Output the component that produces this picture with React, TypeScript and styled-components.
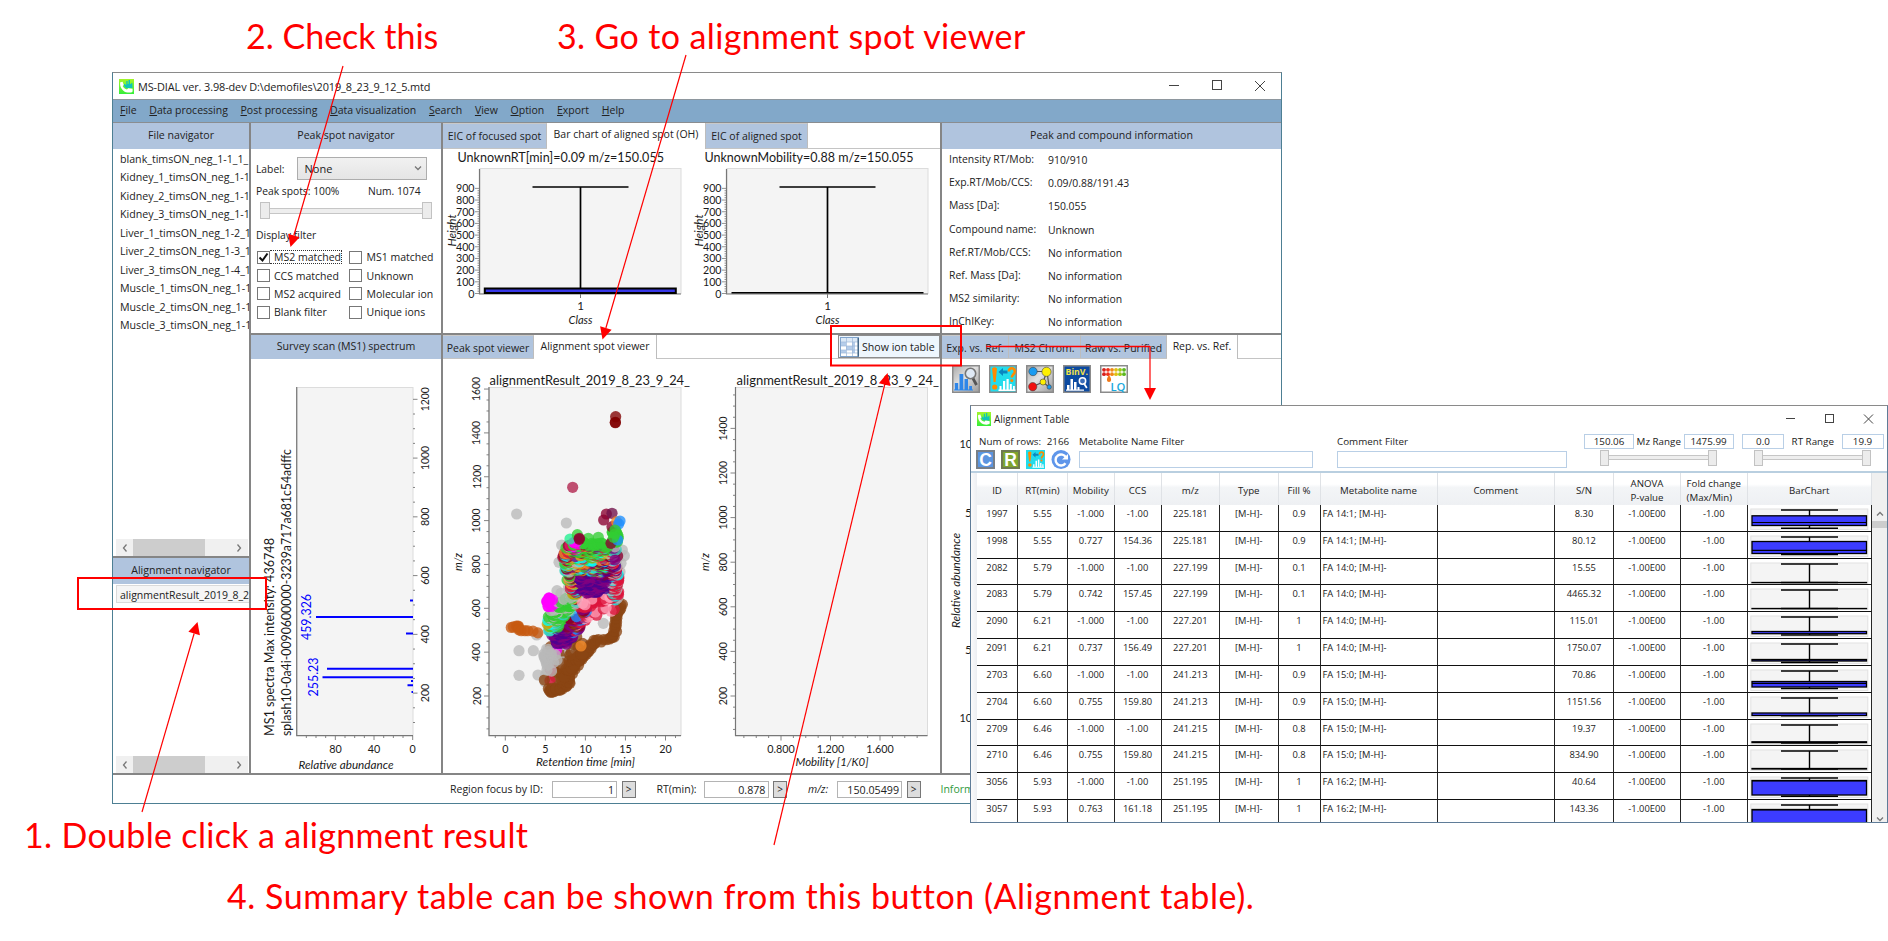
import React from "react";
import styled, { createGlobalStyle, css } from "styled-components";

const ui = `"Open Sans", "Noto Sans", sans-serif`;
const calib = `Lato, "Open Sans", sans-serif`;

const Global = createGlobalStyle`
  body { margin: 0; background: #fff; }
  * { box-sizing: border-box; }
`;

const Page = styled.div`
  position: relative;
  width: 1888px;
  height: 941px;
  overflow: hidden;
  background: #fff;
  font-family: ${ui};
  font-size: 10.6px;
  color: #222;
  white-space: nowrap;
`;

/* ---------- windows ---------- */
const MainWindow = styled.section`
  position: absolute;
  left: 112px;
  top: 72px;
  width: 1170px;
  height: 732px;
  display: flex;
  flex-direction: column;
  background: #fff;
  border: 1px solid #4d7f93;
  border-top-color: #8a8a8a;
`;

const TableWindow = styled.section`
  position: absolute;
  left: 970px;
  top: 405px;
  width: 918px;
  height: 418px;
  display: flex;
  flex-direction: column;
  overflow: hidden;
  background: #fff;
  border: 1px solid #5f7c98;
  border-top-color: #8a8a8a;
  font-size: 9.8px;
`;

const TitleBar = styled.header<{ $small?: boolean }>`
  height: 26px;
  flex: none;
  display: flex;
  align-items: center;
  padding-left: 6px;
  gap: 4px;
  font-size: 10.9px;
  letter-spacing: -0.1px;
  svg { flex: none; }
  ${(p) => p.$small && css`
    gap: 3px;
    font-size: 10px;
    letter-spacing: 0;
  `}
`;
const Spacer = styled.div<{ $w?: number }>`
  flex: ${(p) => (p.$w ? "none" : 1)};
  width: ${(p) => p.$w ?? 0}px;
`;

const MenuBar = styled.nav`
  height: 24px;
  flex: none;
  display: flex;
  align-items: center;
  gap: 12.7px;
  padding: 0 0 3px 7px;
  background: #82a8c9;
  border-top: 1px solid #8e979e;
  border-bottom: 1px solid #8a8d90;
  font-size: 10.5px;
  u { text-underline-offset: 1px; }
`;

const Body = styled.div`
  height: 652px;
  flex: none;
  display: grid;
  grid-template-columns: 136px 190px 497px 339px;
  gap: 2px;
  background: #858585;
  border-bottom: 2px solid #858585;
`;
const Column = styled.div<{ $top: number }>`
  display: grid;
  grid-template-rows: ${(p) => p.$top}px 1fr;
  gap: 2px;
  min-width: 0;
  min-height: 0;
`;
const Panel = styled.div`
  display: flex;
  flex-direction: column;
  background: #fff;
  overflow: hidden;
  min-height: 0;
`;
const PanelHeader = styled.div<{ $h?: number }>`
  height: ${(p) => p.$h ?? 26}px;
  flex: none;
  background: #b0c4de;
  text-align: center;
  line-height: ${(p) => (p.$h ?? 26) - 1}px;
  font-size: 10.6px;
`;

const FileList = styled.div`
  flex: 1;
  padding: 1px 0 0 7px;
  overflow: hidden;
  line-height: 18.45px;
  font-size: 10.65px;
`;
const SelectedItem = styled.div`
  margin: 1px 0 0 3px;
  height: 18px;
  padding-left: 3px;
  line-height: 18px;
  background: #f5f5f5;
  border: 1px solid #dadada;
  border-right: 0;
  overflow: hidden;
  font-size: 10.5px;
`;
const ScrollTrack = styled.div`
  margin: auto 1px 0 3px;
  height: 17px;
  flex: none;
  display: flex;
  align-items: center;
  justify-content: space-between;
  padding: 0 5px;
  background: #f0f0f0;
`;
const ScrollThumb = styled.div`
  width: 72px;
  height: 17px;
  margin-right: 26px;
  background: #cdcdcd;
`;

/* ---------- peak spot navigator ---------- */
const NavBody = styled.div`
  flex: 1;
  padding: 8px 0 0 5px;
`;
const NavLine = styled.div`
  display: flex;
  align-items: center;
  font-size: 10.3px;
`;
const NavText = styled.span<{ $w: number }>`
  width: ${(p) => p.$w}px;
  line-height: 22px;
`;
const SliderPad = styled.div`
  padding: 0 0 0 4px;
`;
const DisplayFilter = styled.div`
  margin-top: 9px;
  line-height: 15px;
  font-size: 10.4px;
`;
const Select = styled.div`
  width: 130px;
  height: 23px;
  margin-left: 13px;
  padding: 0 4px 1px 6px;
  display: flex;
  align-items: center;
  justify-content: space-between;
  background: linear-gradient(#f1f1f1, #e5e5e5);
  border: 1px solid #adadad;
  font-size: 11px;
`;
const Slider = styled.div<{ $w: number; $h: number }>`
  width: ${(p) => p.$w}px;
  height: ${(p) => p.$h}px;
  display: flex;
  align-items: center;
`;
const Thumb = styled.i<{ $w?: number }>`
  width: ${(p) => p.$w ?? 9}px;
  height: 100%;
  background: #ececec;
  border: 1px solid #c2c2c2;
`;
const Track = styled.i<{ $h: number }>`
  flex: 1;
  height: ${(p) => p.$h}px;
  border: solid #c6c6c6;
  border-width: 1px 0;
  background: #eee;
`;
const Checks = styled.div`
  display: grid;
  grid-template-columns: 92.5px 1fr;
  grid-auto-rows: 18.4px;
  margin-top: 5px;
  padding-left: 0.5px;
`;
const Check = styled.div`
  display: flex;
  align-items: center;
  font-size: 10.5px;
`;
const Box = styled.span`
  width: 13px;
  height: 13px;
  flex: none;
  display: grid;
  place-items: center;
  border: 1px solid #777;
  background: #fff;
`;
const CheckLabel = styled.span<{ $focus?: boolean }>`
  height: 14px;
  line-height: 12px;
  padding: 0 0 0 4.5px;
  border: 1px ${(p) => (p.$focus ? "dotted #333" : "solid transparent")};
  border-left-width: 0;
`;

/* ---------- tabs ---------- */
const Tabs = styled.div<{ $h: number }>`
  height: ${(p) => p.$h}px;
  flex: none;
  display: flex;
  align-items: stretch;
  border-bottom: 1px solid #c4c4c4;
`;
const Tab = styled.div<{ $w: number; $on?: boolean }>`
  width: ${(p) => p.$w}px;
  flex: none;
  text-align: center;
  font-size: 10.5px;
  padding-top: ${(p) => (p.$on ? 3 : 4)}px;
  line-height: 16px;
  background: ${(p) => (p.$on ? "#fff" : "#b0c4de")};
  border-right: 1px solid #bdbdbd;
  ${(p) => (p.$on ? "margin-bottom:-1px;" : "border-top: 1px solid #c9c9c9;")}
`;
const IonButton = styled.div`
  width: 102px;
  height: 23px;
  margin-left: auto;
  display: flex;
  align-items: center;
  gap: 3px;
  padding-left: 1px;
  background: #eef6fd;
  border: 1px solid #8c8c8c;
  font-size: 10.6px;
`;

/* ---------- info ---------- */
const InfoGrid = styled.div`
  display: grid;
  grid-template-columns: 99px 1fr;
  grid-auto-rows: 23.2px;
  padding: 2px 0 0 7px;
  font-size: 10.4px;
  line-height: 16px;
`;
const InfoValue = styled.span`
  padding-top: 1px;
`;
const IconBar = styled.div`
  height: 37px;
  flex: none;
  display: flex;
  gap: 9px;
  padding: 6px 0 0 10px;
`;

/* ---------- status ---------- */
const StatusBar = styled.footer`
  flex: 1;
  display: flex;
  align-items: center;
  font-size: 10.5px;
  padding-left: 337px;
`;
const StatusLabel = styled.span<{ $w: number; $italic?: boolean }>`
  width: ${(p) => p.$w}px;
  padding-bottom: 1px;
  font-style: ${(p) => (p.$italic ? "italic" : "normal")};
`;
const StatusInput = styled.div`
  width: 65px;
  height: 17px;
  border: 1px solid #b4b4b4;
  text-align: right;
  padding-right: 2px;
  line-height: 17px;
  font-size: 10.7px;
`;
const GoButton = styled.div`
  width: 14px;
  height: 17px;
  margin-left: 4.5px;
  border: 1px solid #777;
  background: #ddd;
  text-align: center;
  line-height: 15px;
  font-size: 10px;
`;
const Info = styled.span`
  margin-left: 20px;
  color: #2f9a3c;
`;

/* ---------- alignment table ---------- */
const Filters = styled.div`
  height: 39px;
  flex: none;
  display: flex;
  padding: 2px 0 0 5px;
`;
const FilterGroup = styled.div<{ $w: number; $gap?: number }>`
  width: ${(p) => p.$w}px;
  flex: none;
  margin-right: ${(p) => p.$gap ?? 0}px;
`;
const FilterTitle = styled.div<{ $pad?: number }>`
  height: 16px;
  line-height: 16px;
  padding-left: ${(p) => p.$pad ?? 0}px;
  word-spacing: 0.3px;
`;
const FilterInput = styled.div`
  height: 17px;
  margin-top: 1px;
  border: 1px solid #b9cfe6;
`;
const IconRow = styled.div`
  display: flex;
  gap: 6px;
`;
const RangeLine = styled.div`
  display: flex;
  justify-content: space-between;
  align-items: center;
  height: 15px;
`;
const RangeInput = styled.div<{ $w: number }>`
  width: ${(p) => p.$w}px;
  height: 15px;
  line-height: 14px;
  text-align: center;
  border: 1px solid #b9cfe6;
`;
const RangeSlider = styled.div<{ $x: number }>`
  padding: 0.5px 0 0 ${(p) => p.$x}px;
`;
const GridArea = styled.div`
  flex: 1;
  display: grid;
  grid-template-columns: 6px 895px 15px;
  border-top: 2px solid #b9cfe0;
  overflow: hidden;
`;
const RowHeaders = styled.div`
  background: linear-gradient(90deg, #fafafa, #eceef2);
`;
const cols = "41px 50px 46.5px 47px 58.5px 58.5px 42px 117px 117.5px 59px 67px 66.5px 124.5px";
const HeadRow = styled.div`
  display: grid;
  grid-template-columns: ${cols};
  height: 32px;
  background: linear-gradient(#fff 0 35%, #f3f5f7 45%, #eef0f3);
`;
const HeadCell = styled.div`
  display: flex;
  align-items: center;
  justify-content: center;
  line-height: 13.3px;
  padding-top: 3px;
  border-right: 1px solid #dfe2e6;
  font-size: 9.7px;
`;
const Row = styled.div`
  display: grid;
  grid-template-columns: ${cols};
  height: 26.83px;
`;
const Cell = styled.div<{ $left?: boolean }>`
  border-right: 1px solid #262626;
  border-bottom: 1px solid #111;
  text-align: ${(p) => (p.$left ? "left" : "center")};
  padding-left: ${(p) => (p.$left ? 2 : 0)}px;
  line-height: 17.5px;
  font-size: 9.35px;
  overflow: hidden;
  svg { display: block; }
`;
const VScroll = styled.div`
  background: #f0f0f0;
  display: flex;
  flex-direction: column;
  align-items: center;
  padding: 37px 0 4px;
`;
const VThumb = styled.div`
  width: 15px;
  height: 7px;
  margin: 3px 0 auto;
  background: #cdcdcd;
`;

/* ---------- annotations ---------- */
const Note = styled.div<{ $x: number; $y: number; $ls: number }>`
  position: absolute;
  left: ${(p) => p.$x}px;
  top: ${(p) => p.$y}px;
  font-family: ${calib};
  font-size: 34px;
  line-height: 40px;
  letter-spacing: ${(p) => p.$ls}px;
  font-variant-ligatures: none;
  color: #ff0000;
`;
const Overlay = styled.svg`
  position: absolute;
  left: 0;
  top: 0;
`;

/* ---------- chart text ---------- */
type TP = {
  x: number; y: number; s?: number; w?: number; a?: "start" | "middle" | "end";
  r?: boolean; i?: boolean; c?: string; children: React.ReactNode;
};
const T = ({ x, y, s = 11.2, w, a = "middle", r, i, c = "#1a1a1a", children }: TP) => (
  <text
    x={x} y={y} fontSize={s} textAnchor={a} fill={c} fontFamily={calib}
    fontStyle={i ? "italic" : undefined}
    transform={r ? `rotate(-90 ${x} ${y})` : undefined}
    textLength={w} lengthAdjust={w ? "spacingAndGlyphs" : undefined}
  >{children}</text>
);
const range = (n: number) => Array.from({ length: n }, (_, k) => k);

/* ---------- icons ---------- */
const Logo = ({ size }: { size: number }) => (
  <svg width={size} height={size} viewBox="0 0 15 15">
    <defs>
      <linearGradient id="lg" x1="0" y1="0" x2="0" y2="1">
        <stop offset="0" stopColor="#a4f52a" /><stop offset="1" stopColor="#35ee3a" />
      </linearGradient>
    </defs>
    <rect width="15" height="15" fill="url(#lg)" />
    <path d="M5 7V5h1.300v1h1V2h1.300v3h1V1h1.400v4h1.200V4h1.200v5H7z" fill="#0fc4bb" />
    <path d="M1.200 3.200 3.600 2.800 4.800 6 3.600 7C4.500 9 6 10 8 10.400l1.200-1.200 4.400.6v2.600c-1 1.400-4 1.500-6.600.8C3.500 12 .5 8 1.200 3.200z" fill="#fff" />
  </svg>
);
const WinButtons = ({ gap, size, pad }: { gap: number; size: number; pad: number }) => {
  const w = gap * 2 + size;
  return (
    <svg width={w + pad} height="14" viewBox={`0 0 ${w + pad} 14`} fill="none" stroke="#444" strokeWidth="1">
      <path d={`M0 6.5h${size}`} />
      <rect x={gap + 0.5} y={Math.round(7 - size / 2) - 0.5} width={size - 1} height={size - 1} />
      <path d={`M${gap * 2} ${7 - size / 2}l${size} ${size}m0 ${-size}l${-size} ${size}`} />
    </svg>
  );
};
const Chevron = ({ d }: { d: string }) => (
  <svg width="8" height="8" viewBox="0 0 8 8" fill="none" stroke="#777" strokeWidth="1.3"><path d={d} /></svg>
);
const TableIcon = () => (
  <svg width="19" height="20" viewBox="0 0 19 20">
    <rect x=".5" y=".5" width="18" height="19" fill="#fff" stroke="#7fa3cc" />
    <rect x="1" y="1" width="17" height="4" fill="#dbe8f6" />
    <path d="M1 5h5v4H1zM6 9h6v4H6zM1 13h5v3H1zM12 5h3v11h-3z" fill="#b5cdea" />
    <path d="M1 5h17M1 9h17M1 13h17M1 16h17M6.500 1v18M12.500 1v18" stroke="#9db8d8" strokeWidth=".7" />
    <path d="M18.200 1v18.500" stroke="#3d6080" strokeWidth="1.400" fill="none" />
  </svg>
);
const Frame = ({ bg, children }: { bg: string; children: React.ReactNode }) => (
  <svg width="28" height="28" viewBox="0 0 28 28">
    <defs>
      <linearGradient id="gm" x1="0" y1="0" x2="1" y2="1">
        <stop offset="0" stopColor="#a9a9a9" /><stop offset=".45" stopColor="#e2e2e2" /><stop offset="1" stopColor="#9a9a9a" />
      </linearGradient>
    </defs>
    <rect x=".75" y=".75" width="26.500" height="26.500" fill={bg} stroke="#8b8b8b" strokeWidth="1.500" />
    {children}
  </svg>
);
const AnnotArt = () => (
  <>
    <path d="M3 3.500Q5.500 1 8 3.500L6.600 17H4.600z" fill="#ff8a00" />
    <circle cx="5.700" cy="22" r="2.600" fill="#ff8a00" />
    <path d="M9.500 7l4.500-4v2.500h4.500v3H14V11z" fill="#0a86c0" />
    <path d="M19.800 6.500c0-4.500 6-4.500 6 0 0 3-3 3-3 6" fill="none" stroke="#ff8a00" strokeWidth="2.500" />
    <circle cx="22.800" cy="15.500" r="1.500" fill="#ff8a00" />
    <path d="M10.500 25v-4h2v4zM14 25V16h2.200v9zM17.500 25v-11h2.200v11zM20.800 25v-6h2v6zM24 25v-4h1.800v4zM9.500 24.500h17v1.500h-17z" fill="#fff" />
  </>
);
const Icons = () => (
  <IconBar>
    <Frame bg="url(#gm)">
      <path d="M2.800 25v-7h3.400v7zM7.500 25V9h3.800v16zM12.500 25V14H16v11zM17.200 25v-4h2.800v4z" fill="#2f86e8" />
      <path d="M2 25h19" stroke="#2f86e8" />
      <path d="M20.500 12.500l4 7.500" stroke="#555" strokeWidth="2.800" />
      <circle cx="18.500" cy="8.500" r="5.200" fill="#dfe9f5" stroke="#777" strokeWidth="1.600" />
    </Frame>
    <Frame bg="#22dcec"><AnnotArt /></Frame>
    <Frame bg="url(#gm)">
      <path d="M7 6.500h14L17 17 7 21.500M17 17l6 5M21 7l2 14" stroke="#555" strokeWidth="1.200" fill="none" />
      <g stroke="#444" strokeWidth=".6">
        <circle cx="7" cy="6.500" r="4.200" fill="#1a9bf0" />
        <circle cx="20.500" cy="6.800" r="4.600" fill="#fff000" />
        <circle cx="17" cy="17" r="3" fill="#fff000" />
        <circle cx="6.700" cy="21.700" r="4.200" fill="#f01010" />
        <circle cx="23.200" cy="22" r="2.200" fill="#1a9bf0" />
      </g>
    </Frame>
    <Frame bg="#0c4aa0">
      <text x="2.500" y="10" fontFamily={ui} fontWeight="700" fontSize="9" fill="#f2e24a" textLength="22.500" lengthAdjust="spacingAndGlyphs">BinV.</text>
      <path d="M4 25v-5h2.500v5zM7.500 25V14H10v11zM11 25v-8h2.500v8zM14.500 25v-3h2v3zM3 24.500h18v1.200H3z" fill="#fff" />
      <circle cx="19.500" cy="16" r="3.200" fill="#3a6cb8" stroke="#fff" strokeWidth="1.500" />
      <path d="M21.300 19l2.500 4" stroke="#fff" strokeWidth="1.800" />
    </Frame>
    <Frame bg="#fff">
      {["#d8201c", "#f03018", "#f08818", "#e0c010", "#9cc818", "#5cb820"].map((c, k) => (
        <g key={k} fill={c}>
          <circle cx={4 + k * 4} cy="4.800" r="1.900" /><circle cx={4 + k * 4} cy="9.200" r="1.900" />
        </g>
      ))}
      <path d="M9 10c3 4 2.500 7 0 7s-3-3 0-7z" fill="#f07818" />
      <text x="10.500" y="25.500" fontFamily={ui} fontWeight="600" fontSize="11" fill="#18a8dc" textLength="15" lengthAdjust="spacingAndGlyphs">LQ</text>
    </Frame>
  </IconBar>
);
const LetterIcon = ({ c, d, letter }: { c: string; d: string; letter: string }) => (
  <svg width="19" height="19" viewBox="0 0 19 19">
    <rect x="1" y="1" width="17" height="17" fill={c} stroke={d} strokeWidth="2" />
    <text x="9.500" y="15.700" textAnchor="middle" fontFamily="Liberation Sans, sans-serif" fontWeight="700" fontSize="17.500" fill="#fff">{letter}</text>
  </svg>
);

/* ---------- charts ---------- */
const BoxPlots = () => (
  <svg width="497" height="184" viewBox="443 149 497 184">
    {[0, 247].map((dx) => (
      <g key={dx} transform={`translate(${dx} 0)`}>
        <rect x="480" y="168.500" width="201" height="125" fill="#f4f4f4" stroke="#dcdcdc" />
        {range(10).map((k) => <T key={k} x={474.500} y={297.500 - k * 11.680} a="end" w={k ? 18.500 : 6.200} s={11.600}>{k * 100}</T>)}
        <T x={455.500} y={230.500} r i w={32} s={11.500}>Height</T>
        <path d="M479.500 169v125H681" fill="none" stroke="#777" strokeWidth="1.200" />
        {range(46).map((k) => <path key={k} d={`M${k % 5 ? 477.500 : 475} ${293.500 - k * 2.336}H480`} stroke="#777" strokeWidth=".8" />)}
        <path d="M580.500 294v4" stroke="#777" />
        <path d="M532.500 187h96M580.500 187v106" stroke="#000" strokeWidth="1.700" />
        <T x={580.500} y={310} s={11.600}>1</T>
        <T x={580.500} y={324} i w={24} s={11.600}>Class</T>
      </g>
    ))}
    <rect x="484.800" y="288.500" width="191" height="4.500" fill="#3838e8" stroke="#000" strokeWidth="2" />
    <path d="M731.500 292.800h192" stroke="#000" strokeWidth="1.500" />
    <T x={457.500} y={162} a="start" w={206.500} s={12.800}>UnknownRT[min]=0.09 m/z=150.055</T>
    <T x={704.500} y={162} a="start" w={209} s={12.800}>UnknownMobility=0.88 m/z=150.055</T>
  </svg>
);

const Survey = () => (
  <svg width="190" height="414" viewBox="251 359 190 414">
    <rect x="297" y="387.500" width="116" height="348" fill="#f4f4f4" stroke="#dcdcdc" />
    <path d="M296.700 387v348.700H413" fill="none" stroke="#777" strokeWidth="1.200" />
    {range(23).map((k) => <path key={k} d={`M413 ${722.500 - k * 14.690}h${k % 4 === 2 ? 4.500 : 2}`} stroke="#777" strokeWidth=".9" />)}
    {range(6).map((k) => <T key={k} x={429} y={693 - k * 58.750} r w={k > 3 ? 24 : 18.500} s={11.800}>{200 + k * 200}</T>)}
    {range(12).map((k) => <path key={k} d={`M${412.700 - k * 9.670} 736v${k % 4 === 0 ? 4 : 2}`} stroke="#777" strokeWidth=".9" />)}
    <T x={335.500} y={752.500} w={12.500} s={11.800}>80</T>
    <T x={374} y={752.500} w={12.500} s={11.800}>40</T>
    <T x={412.700} y={752.500} w={6.200} s={11.800}>0</T>
    <T x={346} y={769} i w={95} s={12}>Relative abundance</T>
    <T x={274} y={736} a="start" r w={198} s={13}>MS1 spectra Max intensity: 436748</T>
    <T x={291} y={736} a="start" r w={287} s={13}>splash10-0a4i-0090600000-3239a717a681c54adffc</T>
    <g stroke="#0000ff" strokeWidth="2">
      <path d="M316 617h97M327 668.700h86M322.500 677.200h90.500" strokeWidth="1.900" />
      <path d="M410 600.500h3M406 633.500h7M407.500 685.300h5.500M411.500 692h1.500M411 681h2" />
    </g>
    <T x={310.500} y={617} r w={46} s={13} c="#0000ff">459.326</T>
    <T x={317.500} y={677} r w={39} s={13} c="#0000ff">255.23</T>
  </svg>
);

/* deterministic point cloud */
let seed = 7;
const rnd = () => {
  seed = (seed * 16807) % 2147483647;
  return seed / 2147483647;
};
type Dot = [number, number, string];
const C = {
  gray: "#b9b9b9", green: "#32cd32", purple: "#800080", indigo: "#4b0090", mag: "#ff00ff",
  cyan: "#00ffff", crim: "#dc143c", brown: "#8b4513", pink: "#ffa0b8", maroon: "#8b0030",
  orange: "#f58a28", blue: "#1e90ff", teal: "#35d0c0", rust: "#c65a11", gold: "#d0a000", mint: "#20f090",
};
const blob = (n: number, cx: number, cy: number, rx: number, ry: number, colors: string[]): Dot[] =>
  range(n).map(() => {
    const a = rnd() * 6.283;
    const r = Math.sqrt(rnd());
    return [cx + Math.cos(a) * r * rx, cy + Math.sin(a) * r * ry, colors[Math.floor(rnd() * colors.length)]];
  });
const path = (pts: number[][], n: number, j: number, colors: string[]): Dot[] => {
  const out: Dot[] = [];
  for (let k = 0; k < pts.length - 1; k++)
    for (let m = 0; m < n; m++) {
      const t = m / n;
      out.push([
        pts[k][0] + (pts[k + 1][0] - pts[k][0]) * t + (rnd() - 0.5) * j,
        pts[k][1] + (pts[k + 1][1] - pts[k][1]) * t + (rnd() - 0.5) * j,
        colors[Math.floor(rnd() * colors.length)],
      ]);
    }
  return out;
};
const one = (c: string, ...p: number[][]): Dot[] => p.map(([x, y]) => [x, y, c]);
const mix = [C.green, C.gray, C.orange, C.purple, C.crim, C.teal, C.green, C.gold, C.cyan, C.maroon];
/* the dense body is stacked by m/z, heavier ions over lighter ones */
const body: Dot[] = [
  ...blob(16, 345, 990, 22, 40, [C.gray]),
  ...path([[425, 885], [455, 860], [540, 830]], 9, 18, [C.crim, C.crim, C.pink]),
  ...path([[440, 830], [490, 808], [545, 790]], 12, 22, [C.crim, C.pink, C.crim]),
  ...blob(60, 540, 765, 14, 50, [C.crim, C.crim, C.teal, C.gray, C.crim, C.cyan]),
  ...path([[415, 905], [435, 865], [460, 830]], 14, 20, [C.purple, C.maroon, C.crim, C.blue, C.brown]),
  ...path([[350, 895], [375, 855], [425, 800]], 30, 30, [C.green, C.green, C.gray, C.teal]),
  ...path([[350, 865], [362, 835], [415, 805]], 18, 22, [C.green, C.gray, C.green]),
  ...path([[336, 872], [346, 895]], 7, 8, [C.cyan, C.cyan, C.gold]),
  ...blob(80, 382, 917, 32, 28, [C.purple, C.indigo, C.purple]),
  ...blob(20, 408, 880, 15, 20, [C.maroon, C.brown, C.purple]),
  ...blob(18, 345, 818, 12, 16, [C.mag]),
  ...path([[420, 800], [410, 760], [395, 720], [392, 680], [408, 645]], 22, 18, mix),
  ...blob(200, 462, 688, 74, 44, mix),
  ...blob(60, 535, 695, 14, 50, [C.maroon, C.purple, C.crim, C.teal, C.gray]),
  ...blob(150, 470, 757, 50, 34, [C.indigo, C.purple, C.purple, C.indigo, C.purple]),
  ...blob(60, 513, 720, 32, 32, [C.purple, C.indigo, C.maroon]),
  ...blob(70, 470, 655, 50, 24, [C.green]),
  ...blob(24, 422, 648, 18, 14, [C.mag, C.mag, C.crim, C.green]),
  ...blob(22, 540, 620, 12, 22, [C.green]),
];
body.sort((p, q) => q[1] - p[1]);
const dots: Dot[] = [
  ...one(C.gray, [245, 552], [394, 579], [380, 645], [252, 962], [295, 962], [252, 1036], [309, 1035], [505, 880], [372, 697], [366, 782], [378, 790], [400, 775], [335, 957], [305, 915], [330, 1055], [562, 660], [568, 677], [558, 700], [555, 725], [550, 810]),
  ...path([[340, 1035], [395, 960]], 10, 20, [C.gray]),
  ...path([[350, 1070], [375, 1020], [395, 985], [435, 945]], 18, 34, [C.brown, C.brown, C.gray]),
  ...one(C.crim, [347, 1018], [345, 1052]),
  ...path([[345, 1082], [362, 1080], [396, 1062], [410, 1020], [440, 978], [470, 950]], 14, 14, [C.brown]),
  ...path([[385, 1050], [410, 1000], [450, 960]], 12, 20, [C.brown]),
  ...path([[465, 950], [480, 935], [520, 928], [540, 912], [543, 880], [545, 850], [564, 822]], 6, 10, [C.brown]),
  ...one(C.brown, [328, 1050], [347, 950], [425, 920], [405, 975], [380, 1000]),
  ...one(C.orange, [438, 948]),
  ...path([[230, 892], [250, 886], [252, 900], [280, 900], [322, 912]], 3, 5, [C.rust]),
  ...one(C.mag, [365, 960]),
  ...body,
  ...one(C.pink, [443, 820], [450, 824]),
  ...one(C.mint, [405, 627]),
  ...one(C.green, [427, 614], [460, 625], [490, 622]),
  ...one(C.maroon, [433, 625], [433, 628], [514, 552], [506, 570], [531, 590], [528, 640]),
  ...one("#701048", [531, 550]),
  ...one(C.orange, [545, 575]),
  ...one(C.blue, [555, 573], [551, 582], [548, 630]),
  ...one(C.green, [540, 600], [540, 612], [536, 622]),
  ...one(C.purple, [540, 690]),
  ...one("#b0204a", [413, 472]),
  ...one("#800000", [542, 260], [541, 278], [541, 277]),
];

const Axes = ({ x, ys, step, top, xs }: { x: number; ys: number; step: number; top: number; xs: [number, number, number] }) => (
  <>
    <rect x={x} y="387.500" width="192" height="348" fill="#f4f4f4" stroke="#dcdcdc" />
    <path d={`M${x} 387v348.700h192`} fill="none" stroke="#777" strokeWidth="1.200" />
    {range(top).map((k) => <T key={k} x={x - 8.500} y={ys - k * step} r w={k > 3 ? 24 : 18.500} s={11.800}>{200 + k * 200}</T>)}
    {range(33).map((k) => {
      const y = ys + (step / 4) * 3 - (k * step) / 4;
      return y > 387 ? <path key={k} d={`M${x} ${y}h${k % 4 === 3 ? -5 : -2.500}`} stroke="#777" strokeWidth=".9" /> : null;
    })}
    {range(20).map((k) => {
      const px = xs[0] + (k - xs[2]) * (xs[1] / 4);
      return px > x && px < x + 192 ? <path key={k} d={`M${px} 736v${(k - xs[2]) % 4 === 0 ? 4.500 : 2}`} stroke="#777" strokeWidth=".9" /> : null;
    })}
  </>
);
const Scatter = () => (
  <svg width="497" height="414" viewBox="443 359 497 414">
    <Axes x={489} ys={696} step={43.850} top={8} xs={[505.300, 40.050, 2]} />
    <Axes x={735.500} ys={696} step={44.600} top={7} xs={[781, 49.500, 3]} />
    {[0, 5, 10, 15, 20].map((v, k) => <T key={v} x={505.300 + k * 40.050} y={752.500} w={v > 9 ? 12.500 : 6.200} s={11.800}>{v}</T>)}
    {["0.800", "1.200", "1.600"].map((v, k) => <T key={v} x={781 + k * 49.500} y={752.500} w={27.500} s={11.800}>{v}</T>)}
    <T x={585.500} y={766} i w={99} s={12}>Retention time [min]</T>
    <T x={832} y={766} i w={73} s={12}>Mobility [1/K0]</T>
    <T x={461.500} y={562} r i w={18} s={12}>m/z</T>
    <T x={708.500} y={562} r i w={18} s={12}>m/z</T>
    <T x={489.500} y={385} a="start" w={200.500} s={13}>alignmentResult_2019_8_23_9_24_</T>
    <T x={736.500} y={385} a="start" w={202.500} s={13}>alignmentResult_2019_8_23_9_24_</T>
    {dots.map(([x, y, c], k) => <circle key={k} cx={435 + x / 3} cy={330 + y / 3} r="5.600" fill={c} fillOpacity=".78" />)}
  </svg>
);

const RepSpectrum = () => (
  <svg width="339" height="377" viewBox="942 396 339 377">
    <T x={972} y={448} a="end" w={12.500} s={12}>10</T>
    <T x={972} y={516.500} a="end" s={12}>5</T>
    <T x={972} y={653.500} a="end" s={12}>5</T>
    <T x={972} y={722} a="end" w={12.500} s={12}>10</T>
    <T x={960} y={580.500} r i w={95} s={12}>Relative abundance</T>
  </svg>
);

/* whisker top, box top, median, box bottom, whisker bottom (px inside the row) */
const rows: [string, string, string, string, string, string, string, string, number[]][] = [
  ["1997", "5.55", "-1.000", "-1.00", "225.181", "0.9", "FA 14:1; [M-H]-", "8.30", [5, 10.800, 17.500, 20.500, 23.300]],
  ["1998", "5.55", "0.727", "154.36", "225.181", "0.9", "FA 14:1; [M-H]-", "80.12", [5, 9.500, 18.300, 21.500, 22.600]],
  ["2082", "5.79", "-1.000", "-1.00", "227.199", "0.1", "FA 14:0; [M-H]-", "15.55", [5, 23.500, 0, 23.500, 23.500]],
  ["2083", "5.79", "0.742", "157.45", "227.199", "0.1", "FA 14:0; [M-H]-", "4465.32", [5, 23.500, 0, 23.500, 23.500]],
  ["2090", "6.21", "-1.000", "-1.00", "227.201", "1", "FA 14:0; [M-H]-", "115.01", [5, 19.500, 0, 21.700, 23]],
  ["2091", "6.21", "0.737", "156.49", "227.201", "1", "FA 14:0; [M-H]-", "1750.07", [5, 20.500, 0, 22, 23.500]],
  ["2703", "6.60", "-1.000", "-1.00", "241.213", "0.9", "FA 15:0; [M-H]-", "70.86", [5, 15.500, 17.300, 21, 22.500]],
  ["2704", "6.60", "0.755", "159.80", "241.213", "0.9", "FA 15:0; [M-H]-", "1151.56", [5, 20, 0, 22.500, 22.800]],
  ["2709", "6.46", "-1.000", "-1.00", "241.215", "0.8", "FA 15:0; [M-H]-", "19.37", [5, 21.800, 0, 22.600, 23]],
  ["2710", "6.46", "0.755", "159.80", "241.215", "0.8", "FA 15:0; [M-H]-", "834.90", [5, 22.500, 0, 23, 23]],
  ["3056", "5.93", "-1.000", "-1.00", "251.195", "1", "FA 16:2; [M-H]-", "40.64", [5, 7.500, 8, 22, 23.300]],
  ["3057", "5.93", "0.763", "161.18", "251.195", "1", "FA 16:2; [M-H]-", "143.36", [5, 9.500, 10, 24, 26]],
];
const heads: React.ReactNode[] = ["ID", "RT(min)", "Mobility", "CCS", "m/z", "Type", "Fill %", "Metabolite name", "Comment", "S/N",
  <span key="a">ANOVA<br />P-value</span>, <span key="f">Fold change<br />(Max/Min)</span>, "BarChart"];

const MiniBox = ({ v }: { v: number[] }) => (
  <svg width="124" height="26" viewBox="0 0 124 26">
    <rect x="2.800" y="4" width="117" height="20.500" fill="#f4f4f4" stroke="#e2e2e2" />
    <path d={`M33 ${v[0]}h57M33 ${v[4]}h57M61.500 ${v[0]}V${v[4]}`} stroke="#000" strokeWidth="1.400" />
    <rect x="4" y={v[1]} width="114.500" height={Math.max(0.100, v[3] - v[1])} fill="#3c3cff" stroke="#000" strokeWidth="1.300" />
    {v[2] > 0 && <path d={`M4 ${v[2]}h114.500`} stroke="#000" strokeWidth="1.200" />}
  </svg>
);

const Arrow = ({ p }: { p: [number, number, number, number] }) => {
  const [x1, y1, x2, y2] = p;
  const l = Math.hypot(x2 - x1, y2 - y1);
  const ux = (x2 - x1) / l, uy = (y2 - y1) / l;
  const bx = x2 - ux * 12, by = y2 - uy * 12;
  return (
    <>
      <path d={`M${x1} ${y1}L${bx} ${by}`} stroke="#ff0000" strokeWidth="1.200" />
      <path d={`M${x2} ${y2}L${bx - uy * 6} ${by + ux * 6}L${bx + uy * 6} ${by - ux * 6}Z`} fill="#ff0000" />
    </>
  );
};

const files = ["blank_timsON_neg_1-1_1_1", "Kidney_1_timsON_neg_1-1_1", "Kidney_2_timsON_neg_1-1_1", "Kidney_3_timsON_neg_1-1_1",
  "Liver_1_timsON_neg_1-2_1", "Liver_2_timsON_neg_1-3_1", "Liver_3_timsON_neg_1-4_1", "Muscle_1_timsON_neg_1-1", "Muscle_2_timsON_neg_1-1", "Muscle_3_timsON_neg_1-1"];
const menus = ["File", "Data processing", "Post processing", "Data visualization", "Search", "View", "Option", "Export", "Help"];
const checks = ["MS2 matched", "MS1 matched", "CCS matched", "Unknown", "MS2 acquired", "Molecular ion", "Blank filter", "Unique ions"];
const info = [["Intensity RT/Mob:", "910/910"], ["Exp.RT/Mob/CCS:", "0.09/0.88/191.43"], ["Mass [Da]:", "150.055"], ["Compound name:", "Unknown"],
  ["Ref.RT/Mob/CCS:", "No information"], ["Ref. Mass [Da]:", "No information"], ["MS2 similarity:", "No information"], ["InChIKey:", "No information"]];

const HScroll = () => (
  <ScrollTrack>
    <Chevron d="M5.500 0.500L2.500 4l3 3.500" />
    <ScrollThumb />
    <Chevron d="M2.500 0.500L5.500 4l-3 3.500" />
  </ScrollTrack>
);

export default function App() {
  return (
    <Page>
      <Global />
      <MainWindow>
        <TitleBar>
          <Logo size={15} />
          <span>MS-DIAL ver. 3.98-dev D:\demofiles\2019_8_23_9_12_5.mtd</span>
          <Spacer />
          <WinButtons gap={43} size={10} pad={16} />
        </TitleBar>
        <MenuBar>
          {menus.map((m) => <span key={m}><u>{m[0]}</u>{m.slice(1)}</span>)}
        </MenuBar>
        <Body>
          <Column $top={433}>
            <Panel>
              <PanelHeader>File navigator</PanelHeader>
              <FileList>{files.map((f) => <div key={f}>{f}</div>)}</FileList>
              <HScroll />
            </Panel>
            <Panel>
              <PanelHeader>Alignment navigator</PanelHeader>
              <SelectedItem>alignmentResult_2019_8_23</SelectedItem>
              <HScroll />
            </Panel>
          </Column>
          <Column $top={210}>
            <Panel>
              <PanelHeader>Peak spot navigator</PanelHeader>
              <NavBody>
                <NavLine>Label:<Select>None<Chevron d="M1 2.500l3 3 3-3" /></Select></NavLine>
                <NavLine>
                  <NavText $w={112}>Peak spots: 100%</NavText>
                  <NavText $w={60}>Num. 1074</NavText>
                </NavLine>
                <SliderPad><Slider $w={172} $h={17}><Thumb $w={10} /><Track $h={6} /><Thumb $w={10} /></Slider></SliderPad>
                <DisplayFilter>Display filter</DisplayFilter>
                <Checks>
                  {checks.map((c, k) => (
                    <Check key={c}>
                      <Box>{k === 0 && <svg width="11" height="11" viewBox="0 0 11 11" fill="none" stroke="#111" strokeWidth="2"><path d="M1.500 5.500l3 3L9.500 1.500" /></svg>}</Box>
                      <CheckLabel $focus={k === 0}>{c}</CheckLabel>
                    </Check>
                  ))}
                </Checks>
              </NavBody>
            </Panel>
            <Panel>
              <PanelHeader $h={24}>Survey scan (MS1) spectrum</PanelHeader>
              <Survey />
            </Panel>
          </Column>
          <Column $top={210}>
            <Panel>
              <Tabs $h={26}>
                <Tab $w={104}>EIC of focused spot</Tab>
                <Tab $w={159} $on>Bar chart of aligned spot (OH)</Tab>
                <Tab $w={102}>EIC of aligned spot</Tab>
              </Tabs>
              <BoxPlots />
            </Panel>
            <Panel>
              <Tabs $h={24}>
                <Tab $w={91}>Peak spot viewer</Tab>
                <Tab $w={123} $on>Alignment spot viewer</Tab>
                <IonButton><TableIcon />Show ion table</IonButton>
              </Tabs>
              <Scatter />
            </Panel>
          </Column>
          <Column $top={210}>
            <Panel>
              <PanelHeader>Peak and compound information</PanelHeader>
              <InfoGrid>
                {info.map(([a, b]) => <React.Fragment key={a}><span>{a}</span><InfoValue>{b}</InfoValue></React.Fragment>)}
              </InfoGrid>
            </Panel>
            <Panel>
              <Tabs $h={24}>
                <Tab $w={67}>Exp. vs. Ref.</Tab>
                <Tab $w={72}>MS2 Chrom.</Tab>
                <Tab $w={86}>Raw vs. Purified</Tab>
                <Tab $w={71} $on>Rep. vs. Ref.</Tab>
              </Tabs>
              <Icons />
              <RepSpectrum />
            </Panel>
          </Column>
        </Body>
        <StatusBar>
          <StatusLabel $w={102}>Region focus by ID:</StatusLabel><StatusInput>1</StatusInput><GoButton>&gt;</GoButton>
          <Spacer $w={21} />
          <StatusLabel $w={47}>RT(min):</StatusLabel><StatusInput>0.878</StatusInput><GoButton>&gt;</GoButton>
          <Spacer $w={21} />
          <StatusLabel $w={29} $italic>m/z:</StatusLabel><StatusInput>150.05499</StatusInput><GoButton>&gt;</GoButton>
          <Info>Inform</Info>
        </StatusBar>
      </MainWindow>

      <TableWindow>
        <TitleBar $small>
          <Logo size={14} />
          <span>Alignment Table</span>
          <Spacer />
          <WinButtons gap={39} size={9} pad={14} />
        </TitleBar>
        <Filters>
          <FilterGroup $w={103}>
            <FilterTitle $pad={3}>Num of rows:&nbsp; 2166</FilterTitle>
            <IconRow>
              <LetterIcon c="#5b95e0" d="#777f88" letter="C" />
              <LetterIcon c="#7fa52e" d="#6f7a52" letter="R" />
              <svg width="19" height="19" viewBox="0 0 28 28"><rect width="28" height="28" fill="#22dcec" /><AnnotArt /></svg>
              <svg width="20" height="19" viewBox="0 0 20 19">
                <circle cx="10" cy="9.500" r="9.500" fill="#5f96ea" />
                <path d="M14.500 13.300A5.500 5.500 0 1 1 15 7.500" fill="none" stroke="#fff" strokeWidth="2.400" />
                <path d="M17 4v5.500h-6z" fill="#fff" />
              </svg>
            </IconRow>
          </FilterGroup>
          <FilterGroup $w={233.5} $gap={24.5}><FilterTitle>Metabolite Name Filter</FilterTitle><FilterInput /></FilterGroup>
          <FilterGroup $w={230} $gap={17}><FilterTitle>Comment Filter</FilterTitle><FilterInput /></FilterGroup>
          <FilterGroup $w={149.5} $gap={8.5}>
            <RangeLine><RangeInput $w={50}>150.06</RangeInput>Mz Range<RangeInput $w={50}>1475.99</RangeInput></RangeLine>
            <RangeSlider $x={16}><Slider $w={117} $h={16}><Thumb /><Track $h={5} /><Thumb /></Slider></RangeSlider>
          </FilterGroup>
          <FilterGroup $w={141.5}>
            <RangeLine><RangeInput $w={42}>0.0</RangeInput>RT Range<RangeInput $w={42}>19.9</RangeInput></RangeLine>
            <RangeSlider $x={12}><Slider $w={117} $h={16}><Thumb /><Track $h={5} /><Thumb /></Slider></RangeSlider>
          </FilterGroup>
        </Filters>
        <GridArea>
          <RowHeaders />
          <div>
            <HeadRow>{heads.map((h, k) => <HeadCell key={k}>{h}</HeadCell>)}</HeadRow>
            {rows.map((r) => (
              <Row key={r[0]}>
                <Cell>{r[0]}</Cell><Cell>{r[1]}</Cell><Cell>{r[2]}</Cell><Cell>{r[3]}</Cell><Cell>{r[4]}</Cell>
                <Cell>[M-H]-</Cell><Cell>{r[5]}</Cell><Cell $left>{r[6]}</Cell><Cell /><Cell>{r[7]}</Cell>
                <Cell>-1.00E00</Cell><Cell>-1.00</Cell><Cell><MiniBox v={r[8]} /></Cell>
              </Row>
            ))}
          </div>
          <VScroll>
            <Chevron d="M1 5.500l3-3 3 3" />
            <VThumb />
            <Chevron d="M1 2.500l3 3 3-3" />
          </VScroll>
        </GridArea>
      </TableWindow>

      <Overlay width="1888" height="941" viewBox="0 0 1888 941" fill="none">
        <rect x="831" y="326" width="130" height="39.500" stroke="#ff0000" strokeWidth="2" />
        <rect x="78" y="578" width="188" height="31" stroke="#ff0000" strokeWidth="2" />
        <Arrow p={[343, 66, 290.5, 247]} />
        <Arrow p={[686, 55, 602.5, 339.5]} />
        <Arrow p={[142, 812, 197.5, 622]} />
        <Arrow p={[774, 845, 887.5, 373]} />
        <path d="M986 346.500h164" stroke="#ff0000" strokeWidth="1.400" />
        <Arrow p={[1150, 346, 1150, 400]} />
      </Overlay>
      <Note $x={246} $y={16} $ls={0}>2. Check this</Note>
      <Note $x={557} $y={16} $ls={0.37}>3. Go to alignment spot viewer</Note>
      <Note $x={24} $y={815} $ls={0.33}>1. Double click a alignment result</Note>
      <Note $x={227} $y={876} $ls={0.53}>4. Summary table can be shown from this button (Alignment table).</Note>
    </Page>
  );
}
